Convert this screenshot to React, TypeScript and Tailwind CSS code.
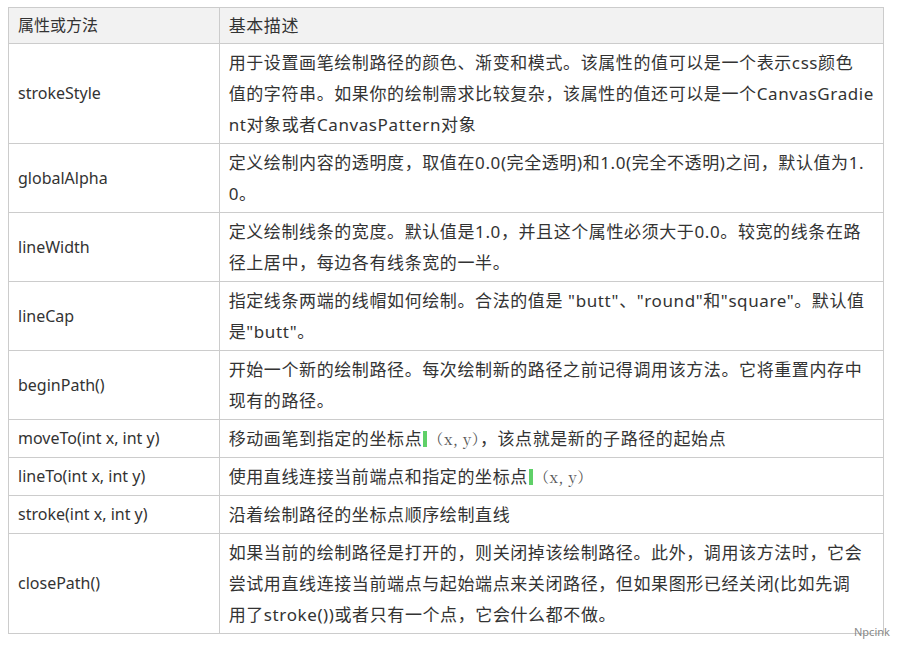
import React from "react";

const G = () => <span className="inline-block w-[4px] h-[16px] bg-[#5fd068] align-[-2px] mx-[1px]" />;
const XY = ({ t }: { t: string }) => (
  <span className="text-[15px] text-[#555]" style={{ fontFamily: '"Noto Serif CJK SC","Liberation Serif",serif' }}>{t}</span>
);

const rows: [string, React.ReactNode][] = [
  ["strokeStyle", <>用于设置画笔绘制路径的颜色、渐变和模式。该属性的值可以是一个表示css颜色<br />值的字符串。如果你的绘制需求比较复杂，该属性的值还可以是一个CanvasGradie<br />nt对象或者CanvasPattern对象</>],
  ["globalAlpha", <>定义绘制内容的透明度，取值在0.0(完全透明)和1.0(完全不透明)之间，默认值为1.<br />0。</>],
  ["lineWidth", <>定义绘制线条的宽度。默认值是1.0，并且这个属性必须大于0.0。较宽的线条在路<br />径上居中，每边各有线条宽的一半。</>],
  ["lineCap", <>指定线条两端的线帽如何绘制。合法的值是 "butt"、"round"和"square"。默认值<br />是"butt"。</>],
  ["beginPath()", <>开始一个新的绘制路径。每次绘制新的路径之前记得调用该方法。它将重置内存中<br />现有的路径。</>],
  ["moveTo(int x, int y)", <>移动画笔到指定的坐标点<G /><XY t="（x, y）" />，该点就是新的子路径的起始点</>],
  ["lineTo(int x, int y)", <>使用直线连接当前端点和指定的坐标点<G /><XY t="（x, y）" /></>],
  ["stroke(int x, int y)", <>沿着绘制路径的坐标点顺序绘制直线</>],
  ["closePath()", <>如果当前的绘制路径是打开的，则关闭掉该绘制路径。此外，调用该方法时，它会<br />尝试用直线连接当前端点与起始端点来关闭路径，但如果图形已经关闭(比如先调<br />用了stroke())或者只有一个点，它会什么都不做。</>],
];

export default function App() {
  return (
    <div className="w-[899px] h-[649px] bg-white relative text-[#333] text-[16px]" style={{ fontFamily: '"Noto Sans","Noto Sans CJK SC",sans-serif' }}>
      <div className="pt-[7px] pl-[8px]">
        <table className="border-collapse w-[876px]">
          <thead>
            <tr className="bg-[#f2f2f2]">
              <th className="w-[223px] border border-[#ccc] text-left font-normal px-[9px] py-[2px] leading-[31px]">属性或方法</th>
              <th className="border border-[#ccc] text-left font-normal px-[9px] py-[2px] leading-[31px] text-[17px] tracking-[0.6px]">基本描述</th>
            </tr>
          </thead>
          <tbody>
            {rows.map(([a, b], i) => (
              <tr key={i}>
                <td className="border border-[#ccc] px-[9px] py-[3px] leading-[31px] whitespace-nowrap">{a}</td>
                <td className="border border-[#ccc] px-[9px] py-[3px] leading-[31px] whitespace-nowrap text-[17px] tracking-[0.6px]">{b}</td>
              </tr>
            ))}
          </tbody>
        </table>
      </div>
      <div className="absolute left-[854px] top-[624px] text-[11px] text-[#888]">Npcink</div>
    </div>
  );
}
